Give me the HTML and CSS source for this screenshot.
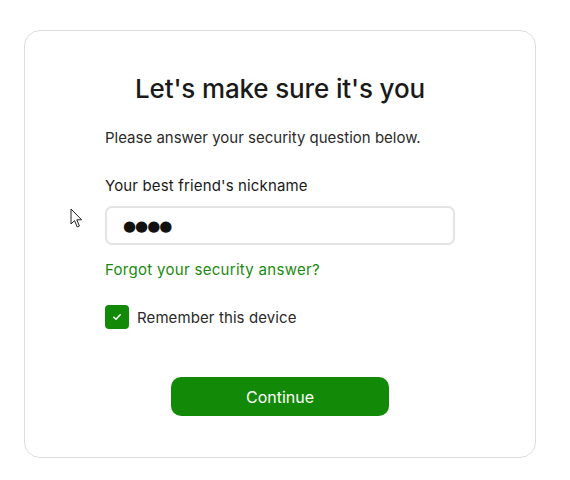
FILE: index.html
```html
<!DOCTYPE html>
<html>
<head>
<meta charset="utf-8">
<link rel="stylesheet" href="styles.css">
</head>
<body>
<div class="card">
  <h1 class="title">Let's make sure it's you</h1>
  <div class="content">
    <p class="intro">Please answer your security question below.</p>
    <label class="label" for="answer">Your best friend's nickname</label>
    <div class="input"><span class="dots">●●●●</span></div>
    <a class="link" href="#">Forgot your security answer?</a>
    <div class="remember">
      <span class="checkbox">
        <svg width="12" height="12" viewBox="0 0 12 12"><path d="M2.8 6.2 L5 8.3 L9.2 3.8" fill="none" stroke="#fff" stroke-width="1.5" stroke-linecap="round" stroke-linejoin="round"/></svg>
      </span>
      <span class="remember-text">Remember this device</span>
    </div>
    <div class="actions"><button class="btn">Continue</button></div>
  </div>
  <svg class="cursor" width="14" height="21" viewBox="0 0 14 21"><path d="M1 1 L1 16 L4.5 12.6 L7.2 19 L9.4 18 L6.8 11.8 L11.6 11.8 Z" fill="#fff" stroke="#222" stroke-width="1" stroke-linejoin="round"/></svg>
</div>
</body>
</html>
```
FILE: styles.css
```css
html, body { margin: 0; padding: 0; background: #fff; }
body { font-family: Inter, "Liberation Sans", Arial, sans-serif; color: #1f1f1f; }
.card {
  position: relative;
  box-sizing: border-box;
  margin: 30px 0 0 24px;
  width: 512px;
  height: 428px;
  border: 1px solid #dcdcdc;
  border-radius: 16px;
  padding-top: 42px;
}
.title {
  margin: 0;
  text-align: center;
  font-size: 26px;
  font-weight: 500;
  line-height: 32px;
  letter-spacing: -0.15px;
  color: #1a1a1a;
}
.content { width: 350px; margin: 0 auto; padding-top: 23px; }
.intro { margin: 0; font-size: 15px; line-height: 20px; color: #2a2a2a; }
.label { display: block; margin-top: 28px; font-size: 15px; line-height: 20px; letter-spacing: 0.15px; color: #1a1a1a; }
.input {
  box-sizing: border-box;
  margin-top: 10px;
  height: 39px;
  border: 2px solid #e4e4e4;
  border-radius: 7px;
  display: flex; align-items: center;
  padding-left: 16px;
}
.dots { font-family: "DejaVu Sans", sans-serif; font-size: 15px; letter-spacing: -1px; color: #111; }
.link { display: block; margin-top: 15px; font-size: 15px; line-height: 20px; letter-spacing: 0.3px; color: #1a8a0e; text-decoration: none; }
.remember { display: flex; align-items: center; margin-top: 25px; gap: 8px; }
.checkbox { width: 24px; height: 24px; border-radius: 4px; background: #138a07; display: flex; align-items: center; justify-content: center; }
.remember-text { font-size: 15px; letter-spacing: 0.1px; color: #2a2a2a; }
.actions { display: flex; justify-content: center; margin-top: 48px; }
.btn {
  width: 218px; height: 39px;
  border: none; border-radius: 10px;
  background: #138a07; color: #fff;
  font-family: Inter, "Liberation Sans", Arial, sans-serif;
  font-size: 16px;
}
.cursor { position: absolute; left: 45px; top: 177px; }
```
